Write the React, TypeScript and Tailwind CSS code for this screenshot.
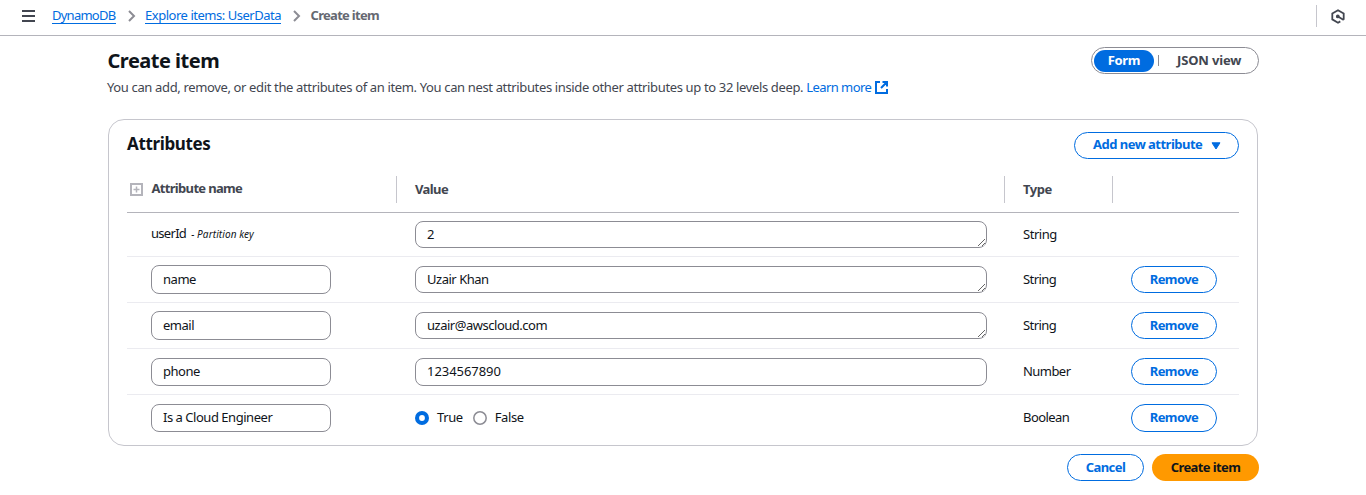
import React from "react";

type Kind = "text" | "number" | "boolean";

interface Row {
  name: string;
  value: string;
  type: string;
  kind: Kind;
}

const rows: Row[] = [
  { name: "name", value: "Uzair Khan", type: "String", kind: "text" },
  { name: "email", value: "uzair@awscloud.com", type: "String", kind: "text" },
  { name: "phone", value: "1234567890", type: "Number", kind: "number" },
  { name: "Is a Cloud Engineer", value: "true", type: "Boolean", kind: "boolean" },
];

const grid = "grid grid-cols-[270px_608px_108px_1fr]";

function Chevron() {
  return (
    <svg width="8" height="12" viewBox="0 0 8 12" fill="none" stroke="#8c8c94" strokeWidth="2">
      <path d="M1 1l5 5-5 5" />
    </svg>
  );
}

function TextValue({ value }: { value: string }) {
  return (
    <textarea
      rows={1}
      defaultValue={value}
      className="block h-[27px] w-[572px] resize-y overflow-hidden rounded-lg border border-[#8c8c94] bg-white px-[11px] py-[2px] leading-[20px] tracking-[-0.48px] outline-none"
    />
  );
}

function Radio({ checked, label }: { checked: boolean; label: string }) {
  return (
    <label className="flex items-center gap-2">
      <svg width="14" height="14" viewBox="0 0 14 14">
        {checked ? (
          <>
            <circle cx="7" cy="7" r="7" fill="#006ce0" />
            <circle cx="7" cy="7" r="2.9" fill="#fff" />
          </>
        ) : (
          <circle cx="7" cy="7" r="6.2" fill="#fff" stroke="#8c8c94" strokeWidth="1.5" />
        )}
      </svg>
      <span className="pb-[2px] tracking-[-0.4px]">{label}</span>
    </label>
  );
}

function ValueCell({ row }: { row: Row }) {
  if (row.kind === "text") return <TextValue value={row.value} />;
  if (row.kind === "number")
    return (
      <input
        defaultValue={row.value}
        className="block h-[28px] w-[572px] rounded-lg border border-[#8c8c94] bg-white px-[11px] pb-[2px] tracking-[-0.05px] outline-none"
      />
    );
  return (
    <div className="flex gap-[10px]">
      <Radio checked label="True" />
      <Radio checked={false} label="False" />
    </div>
  );
}

export default function App() {
  return (
    <div className="h-[495px] overflow-hidden bg-white font-['Noto_Sans',sans-serif] text-[13px] leading-[20px] tracking-[-0.45px] text-[#0f141a]">
      <header className="flex h-[36px] items-center border-b border-[#b4b4bb] pb-[4px]">
        <button className="ml-[22px] flex h-[12px] w-[13px] flex-col justify-between">
          <span className="h-[2px] w-full bg-[#424650]" />
          <span className="h-[2px] w-full bg-[#424650]" />
          <span className="h-[2px] w-full bg-[#424650]" />
        </button>
        <nav className="ml-[17px] flex items-center">
          <a className="h-[17px] w-[64px] whitespace-nowrap border-b border-[#006ce0] leading-[16px] tracking-[-0.75px] text-[#006ce0]">DynamoDB</a>
          <span className="ml-[12px] mr-[9px]"><Chevron /></span>
          <a className="h-[17px] w-[136px] whitespace-nowrap border-b border-[#006ce0] leading-[16px] tracking-[-0.47px] text-[#006ce0]">Explore items: UserData</a>
          <span className="ml-[12px] mr-[9px]"><Chevron /></span>
          <span className="whitespace-nowrap pb-[2px] pl-[0.5px] font-bold tracking-[-0.7px] text-[#656871]">Create item</span>
        </nav>
        <span className="ml-auto h-[22px] w-px bg-[#c6c6cd]" />
        <svg className="ml-[14px] mr-[21px] mt-px" width="14" height="15" viewBox="0 0 14 15" fill="none" stroke="#424650" strokeWidth="1.8">
          <path d="M9.300 12.400L7 13.700 1.300 10.400V4.500L7 1.300l5.700 3.200v6.300" />
          <path d="M7 7.500l5.700 3.400" />
          <circle cx="6.800" cy="7.400" r="1" fill="#424650" />
        </svg>
      </header>

      <main className="mx-auto w-[1150px]">
        <div className="flex h-[83px] items-start justify-between pt-[11px]">
          <div>
            <h1 className="-ml-[0.5px] text-[20px] font-bold leading-[27px] tracking-[-0.5px]">Create item</h1>
            <p className="-ml-px mt-[3px] flex items-center whitespace-nowrap text-[#424650]">
              <span className="tracking-[-0.358px]">You can add, remove, or edit the attributes of an item. You can nest attributes inside other attributes up to 32 levels deep.</span>
              <a className="ml-[3px] tracking-[-0.55px] text-[#006ce0]">Learn more</a>
              <svg className="ml-[3.500px] mt-px" width="13" height="13" viewBox="0 0 13 13" fill="none" stroke="#006ce0" strokeWidth="2">
                <path d="M5 1H1v11h11V8M7.5 1H12v4.500M12 1L6 7" />
              </svg>
            </p>
          </div>
          <div className="-mr-px flex h-[27px] w-[168px] items-center rounded-full border border-[#8c8c94] pl-[2px] font-bold tracking-[-0.35px]">
            <span className="flex h-[22px] w-[60px] items-center justify-center rounded-full bg-[#006ce0] pb-[2px] text-white">Form</span>
            <span className="ml-1 h-[11px] w-px bg-[#8c8c94]" />
            <span className="ml-[18px] whitespace-nowrap pb-[2px] tracking-[-0.15px] text-[#424650]">JSON view</span>
          </div>
        </div>

        <section className="h-[327px] rounded-2xl border border-[#c6c6cd] px-[18px]">
          <div className="flex h-[56px] items-start justify-between pt-[12px]">
            <h2 className="text-[17px] font-bold leading-[24px] tracking-[-0.35px]">Attributes</h2>
            <button className="flex h-[27px] w-[165px] items-center whitespace-nowrap rounded-full border border-[#006ce0] pl-[18px] font-bold tracking-[-0.52px] text-[#006ce0]">
              <span className="pb-[3px]">Add new attribute</span>
              <svg className="ml-auto mr-[17px]" width="10" height="8" viewBox="0 0 10 8">
                <path d="M1 .8h8L5 7z" fill="#006ce0" stroke="#006ce0" strokeLinejoin="round" />
              </svg>
            </button>
          </div>

          <div className={`${grid} h-[37px] border-b border-[#b4b4bb] font-bold text-[#424650]`}>
            <div className="flex h-[27px] items-center border-r border-[#c6c6cd] pl-[3px]">
              <svg width="13" height="13" viewBox="0 0 13 13" fill="none" stroke="#b4b4bb">
                <path d="M1 1h11v11H1z" strokeWidth="2" />
                <path d="M6.500 3.500v6M3.500 6.500h6" strokeWidth="1.5" />
              </svg>
              <span className="ml-[8.500px] pb-[3px] tracking-[-0.68px]">Attribute name</span>
            </div>
            <div className="flex h-[27px] items-center border-r border-[#c6c6cd] pb-[1px] pl-[18px] tracking-[-0.6px]">Value</div>
            <div className="flex h-[27px] items-center border-r border-[#c6c6cd] pb-[1px] pl-[18px]">Type</div>
            <div />
          </div>

          <div className={`${grid} h-[44px] items-center border-b border-[#ebebf0]`}>
            <div className="flex items-baseline gap-[5px] pb-[2px] pl-[24px]">
              <span className="tracking-[-0.7px]">userId</span>
              <span className="text-[10px] italic tracking-[0.1px]">- Partition key</span>
            </div>
            <div className="pl-[18px]"><TextValue value="2" /></div>
            <div className="pb-[2px] pl-[18px]">String</div>
            <div />
          </div>

          {rows.map((row, i) => (
            <div key={row.name} className={`${grid} h-[46px] items-center border-b border-[#ebebf0] last:border-transparent`}>
              <div className="pl-[24px]">
                <input
                  defaultValue={row.name}
                  className={`block w-[180px] rounded-lg border border-[#8c8c94] bg-white px-[11px] pb-[2px] tracking-[-0.47px] outline-none ${i < 2 ? "h-[29px]" : "h-[28px]"}`}
                />
              </div>
              <div className="pl-[18px]"><ValueCell row={row} /></div>
              <div className="pb-[2px] pl-[18px] tracking-[-0.55px]">{row.type}</div>
              <div className="pl-[18px]">
                <button className={`block w-[86px] rounded-full border border-[#006ce0] text-center font-bold leading-[25px] tracking-[-0.6px] text-[#006ce0] ${i < 3 ? "h-[27px]" : "h-[28px]"}`}>Remove</button>
              </div>
            </div>
          ))}
        </section>

        <footer className="-mr-px mt-[8px] flex justify-end gap-2 font-bold tracking-[-0.6px]">
          <button className="h-[27px] w-[77px] rounded-full border border-[#006ce0] pb-[2px] text-[#006ce0]">Cancel</button>
          <button className="h-[27px] w-[107px] rounded-full bg-[#ff9900] pb-[2px]">Create item</button>
        </footer>
      </main>
    </div>
  );
}
